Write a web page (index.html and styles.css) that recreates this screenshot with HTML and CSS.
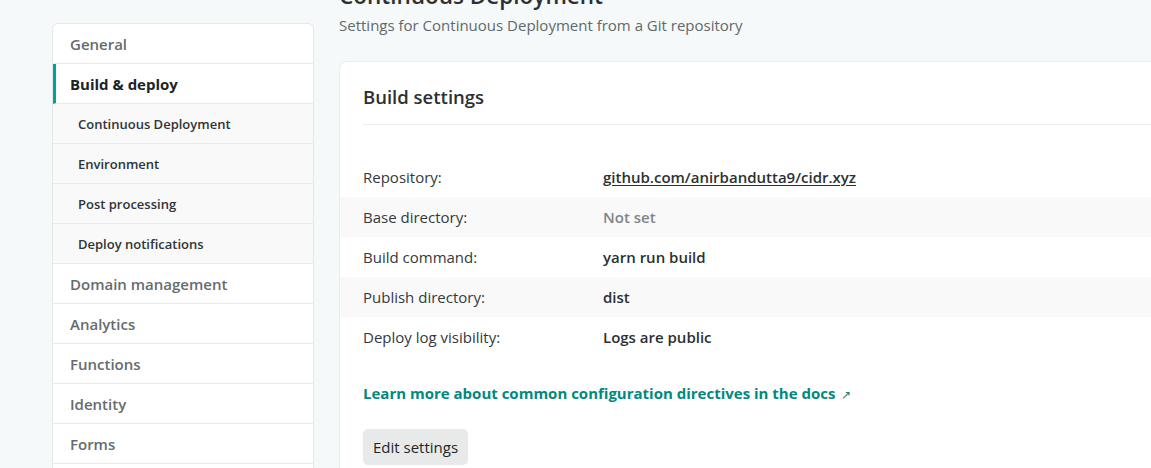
FILE: index.html
```html
<!DOCTYPE html>
<html lang="en">
<head>
<meta charset="utf-8">
<title>Continuous Deployment</title>
<link rel="stylesheet" href="styles.css">
</head>
<body>
<div class="layout">
  <nav class="sidenav">
    <a class="nav-item">General</a>
    <a class="nav-item active">Build &amp; deploy</a>
    <a class="nav-sub">Continuous Deployment</a>
    <a class="nav-sub">Environment</a>
    <a class="nav-sub">Post processing</a>
    <a class="nav-sub">Deploy notifications</a>
    <a class="nav-item">Domain management</a>
    <a class="nav-item">Analytics</a>
    <a class="nav-item">Functions</a>
    <a class="nav-item">Identity</a>
    <a class="nav-item">Forms</a>
    <a class="nav-item">Large Media</a>
  </nav>
  <main class="main">
    <header class="page-head">
      <h1 class="page-title">Continuous Deployment</h1>
      <p class="page-sub">Settings for Continuous Deployment from a Git repository</p>
    </header>
    <section class="card">
      <div class="card-head"><h2 class="card-title">Build settings</h2></div>
      <dl class="settings">
        <div class="row"><dt>Repository:</dt><dd><a class="repo">github.com/anirbandutta9/cidr.xyz</a></dd></div>
        <div class="row alt"><dt>Base directory:</dt><dd class="muted">Not set</dd></div>
        <div class="row"><dt>Build command:</dt><dd>yarn run build</dd></div>
        <div class="row alt"><dt>Publish directory:</dt><dd>dist</dd></div>
        <div class="row"><dt>Deploy log visibility:</dt><dd>Logs are public</dd></div>
      </dl>
      <div class="card-foot">
        <a class="docs-link">Learn more about common configuration directives in the docs <span class="ext">&#8599;</span></a>
        <button class="btn">Edit settings</button>
      </div>
    </section>
  </main>
</div>
</body>
</html>
```
FILE: styles.css
```css
html, body {
  margin: 0;
  padding: 0;
  background: #f6f9f9;
  font-family: "Open Sans", "Noto Sans", sans-serif;
  color: #2b3033;
  overflow: hidden;
}
.layout {
  display: flex;
  align-items: flex-start;
  gap: 25px;
  padding-left: 52px;
  margin-top: -19px;
}
.sidenav {
  width: 262px;
  flex: none;
  margin-top: 42px;
  background: #fff;
  border: 1px solid #e5e8e8;
  border-radius: 6px;
  display: flex;
  flex-direction: column;
  box-sizing: border-box;
}
.nav-item, .nav-sub {
  display: flex;
  align-items: center;
  height: 40px;
  box-sizing: border-box;
  border-bottom: 1px solid #e9ebeb;
  padding-left: 17px;
  font-size: 15px;
  font-weight: 600;
  color: #656b70;
}
.nav-item.active {
  color: #1b2327;
  font-weight: 700;
  border-left: 3px solid #00a394;
  padding-left: 14px;
}
.nav-sub {
  background: #f9f9f9;
  padding-left: 25px;
  font-size: 13px;
  color: #2e3438;
}
.main {
  flex: 1;
  min-width: 0;
}
.page-title {
  margin: 0 0 4px;
  height: 30px;
  font-size: 22.5px;
  line-height: 30px;
  font-weight: 600;
  color: #2b3033;
  white-space: nowrap;
}
.page-sub {
  margin: 0;
  height: 20px;
  font-size: 15px;
  line-height: 20px;
  color: #62686c;
}
.card {
  margin-top: 26px;
  background: #fff;
  border: 1px solid #eceeee;
  border-right: none;
  border-radius: 8px 0 0 8px;
  padding-bottom: 20px;
}
.card-head {
  margin-left: 23px;
  padding: 22px 0 14px;
  border-bottom: 1px solid #ececec;
}
.card-title {
  margin: 0;
  font-size: 18.5px;
  line-height: 26px;
  font-weight: 600;
  color: #2b3033;
}
.settings {
  margin: 32px 0 0;
}
.row {
  display: flex;
  align-items: center;
  height: 40px;
  padding-left: 23px;
}
.row.alt {
  background: #f9f9f9;
}
.row dt {
  width: 240px;
  flex: none;
  font-size: 15px;
  color: #33393d;
}
.row dd {
  margin: 0;
  font-size: 15px;
  font-weight: 600;
  color: #2b3033;
}
.row dd.muted {
  color: #808589;
}
.repo {
  color: #2b3033;
  text-decoration: underline;
  text-underline-offset: 2px;
}
.card-foot {
  padding: 0 23px;
  display: flex;
  flex-direction: column;
  align-items: flex-start;
}
.docs-link {
  margin-top: 26px;
  font-size: 15px;
  font-weight: 700;
  color: #00897e;
  line-height: 20px;
}
.ext {
  font-weight: 400;
  font-size: 12px;
  margin-left: 2px;
}
.btn {
  margin-top: 24px;
  height: 36px;
  padding: 0 10px;
  border: none;
  border-radius: 5px;
  background: #e8eaea;
  font-family: inherit;
  font-size: 15px;
  color: #1f2528;
}
```
